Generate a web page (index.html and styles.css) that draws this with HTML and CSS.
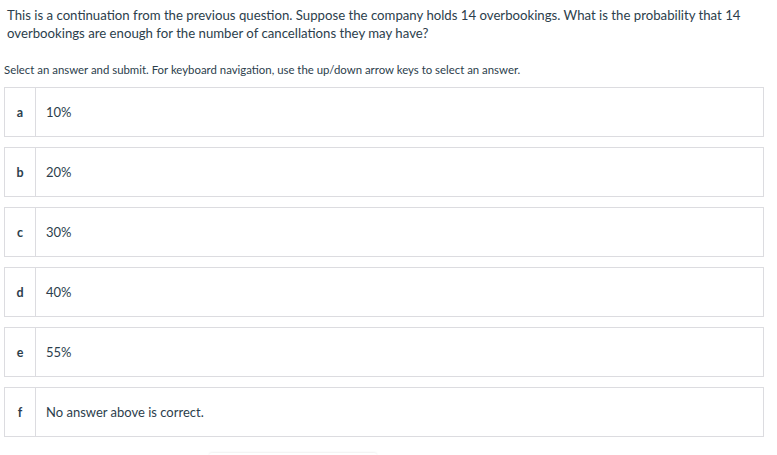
FILE: index.html
```html
<!DOCTYPE html>
<html>
<head>
<meta charset="utf-8">
<link rel="stylesheet" href="styles.css">
</head>
<body>
<div class="page">
  <p class="question">This is a continuation from the previous question. Suppose the company holds 14 overbookings. What is the probability that 14 overbookings are enough for the number of cancellations they may have?</p>
  <p class="hint">Select an answer and submit. For keyboard navigation, use the up/down arrow keys to select an answer.</p>
  <div class="answers">
    <div class="answer"><div class="letter">a</div><div class="text">10%</div></div>
    <div class="answer"><div class="letter">b</div><div class="text">20%</div></div>
    <div class="answer"><div class="letter">c</div><div class="text">30%</div></div>
    <div class="answer"><div class="letter">d</div><div class="text">40%</div></div>
    <div class="answer"><div class="letter">e</div><div class="text">55%</div></div>
    <div class="answer"><div class="letter">f</div><div class="text">No answer above is correct.</div></div>
  </div>
  <div class="submit-row"><div class="submit"></div></div>
</div>
</body>
</html>
```
FILE: styles.css
```css
html, body {
  margin: 0;
  padding: 0;
  background: #ffffff;
}
body {
  font-family: Lato, "Liberation Sans", sans-serif;
  color: #2c3e4c;
}
.page {
  padding: 7px 13px 0 4px;
}
.question {
  margin: 0 0 0 3px;
  font-size: 13.2px;
  line-height: 17.5px;
}
.hint {
  margin: 20px 0 0 0;
  font-size: 11.4px;
  line-height: 15px;
}
.answers {
  margin-top: 10px;
  display: flex;
  flex-direction: column;
  gap: 10px;
}
.answer {
  display: flex;
  height: 48px;
  border: 1px solid #dcdce0;
}
.letter {
  width: 30px;
  border-right: 1px solid #dcdce0;
  display: flex;
  align-items: center;
  justify-content: center;
  font-weight: bold;
  font-size: 12.5px;
}
.text {
  display: flex;
  align-items: center;
  padding-left: 10px;
  font-size: 13px;
}
.submit-row {
  padding-left: 205px;
  padding-top: 16px;
}
.submit {
  width: 168px;
  height: 10px;
  border-radius: 3px;
  box-shadow: 0 -1px 2px rgba(0,0,0,0.06);
}
```
